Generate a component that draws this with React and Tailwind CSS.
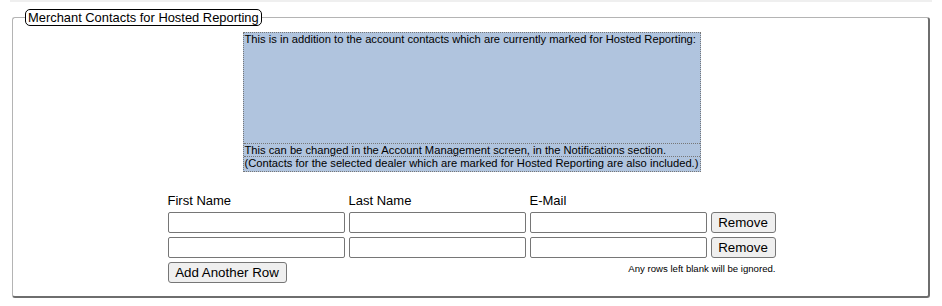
import React from "react";

const inputCls =
  "w-[177px] h-[21px] border border-[#767676] rounded-[2px] bg-white";
const btnCls =
  "h-[21px] border border-[#767676] rounded-[3px] bg-[#efefef] text-[13.33px] leading-none text-black";

export default function App() {
  return (
    <div className="w-[942px] h-[306px] bg-white font-['Liberation_Sans',Arial,sans-serif] text-black">
      <div className="mx-[10px] border-t-2 border-[#efefef] pt-[7px]">
        <fieldset className="mx-[2px] border-t border-l border-t-[#b4b4b4] border-l-[#b4b4b4] border-r-2 border-b-2 border-r-[#6e6e6e] border-b-[#6e6e6e] rounded-[3px] pl-[12px] pr-[10px] pb-[11px] pt-[6px] h-[289px]">
          <legend className="border border-black rounded-[5px] px-[2px] text-[12.9px] leading-[15px]">
            Merchant Contacts for Hosted Reporting
          </legend>
          <div className="flex flex-col items-center">
            <div className="w-[458px] h-[140px] bg-[#b0c4de] border border-dotted border-[#777] text-[11.2px] leading-[13px] flex flex-col whitespace-nowrap">
              <div className="h-[111px] px-[1px] border-b border-dotted border-[#777]">
                This is in addition to the account contacts which are currently marked for Hosted Reporting:
              </div>
              <div className="h-[13px] px-[1px] border-b border-dotted border-[#777]">
                This can be changed in the Account Management screen, in the Notifications section.
              </div>
              <div className="px-[1px]">
                (Contacts for the selected dealer which are marked for Hosted Reporting are also included.)
              </div>
            </div>

            <div className="mt-[21px] grid grid-cols-[177px_177px_177px_auto] gap-x-[4px] gap-y-[4px] text-[13px]">
              <div className="leading-[15px]">First Name</div>
              <div className="leading-[15px]">Last Name</div>
              <div className="leading-[15px]">E-Mail</div>
              <div></div>

              <input className={inputCls} />
              <input className={inputCls} />
              <input className={inputCls} />
              <button className={btnCls + " w-[65px]"}>Remove</button>

              <input className={inputCls} />
              <input className={inputCls} />
              <input className={inputCls} />
              <button className={btnCls + " w-[65px]"}>Remove</button>

              <div>
                <button className={btnCls + " w-[119px]"}>Add Another Row</button>
              </div>
              <div className="col-span-3 text-right text-[9.6px] leading-[11px] pt-[1px]">
                Any rows left blank will be ignored.
              </div>
            </div>
          </div>
        </fieldset>
      </div>
    </div>
  );
}
